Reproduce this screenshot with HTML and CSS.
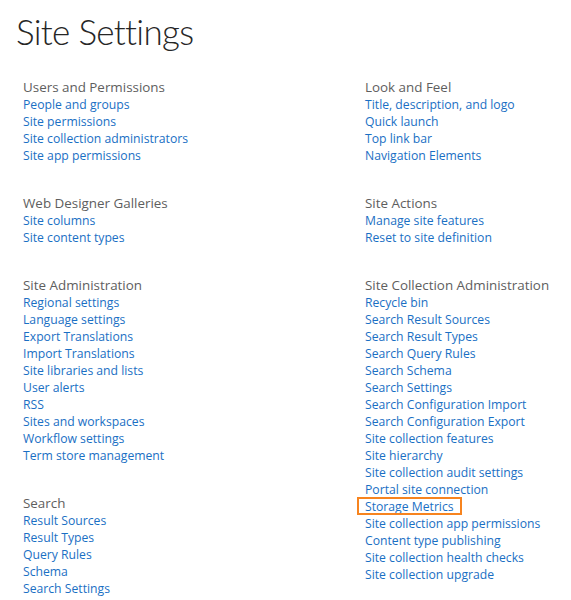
FILE: index.html
```html
<!DOCTYPE html>
<html>
<head>
<meta charset="utf-8">
<link rel="stylesheet" href="styles.css">
</head>
<body>
<h1 class="title">Site Settings</h1>
<div class="grid">
  <div class="col">
    <div class="section">
      <div class="sec-head">Users and Permissions</div>
      <a class="link" href="#">People and groups</a>
      <a class="link" href="#">Site permissions</a>
      <a class="link" href="#">Site collection administrators</a>
      <a class="link" href="#">Site app permissions</a>
    </div>
    <div class="section">
      <div class="sec-head">Web Designer Galleries</div>
      <a class="link" href="#">Site columns</a>
      <a class="link" href="#">Site content types</a>
    </div>
    <div class="section">
      <div class="sec-head">Site Administration</div>
      <a class="link" href="#">Regional settings</a>
      <a class="link" href="#">Language settings</a>
      <a class="link" href="#">Export Translations</a>
      <a class="link" href="#">Import Translations</a>
      <a class="link" href="#">Site libraries and lists</a>
      <a class="link" href="#">User alerts</a>
      <a class="link" href="#">RSS</a>
      <a class="link" href="#">Sites and workspaces</a>
      <a class="link" href="#">Workflow settings</a>
      <a class="link" href="#">Term store management</a>
    </div>
    <div class="section">
      <div class="sec-head">Search</div>
      <a class="link" href="#">Result Sources</a>
      <a class="link" href="#">Result Types</a>
      <a class="link" href="#">Query Rules</a>
      <a class="link" href="#">Schema</a>
      <a class="link" href="#">Search Settings</a>
    </div>
  </div>
  <div class="col">
    <div class="section">
      <div class="sec-head">Look and Feel</div>
      <a class="link" href="#">Title, description, and logo</a>
      <a class="link" href="#">Quick launch</a>
      <a class="link" href="#">Top link bar</a>
      <a class="link" href="#">Navigation Elements</a>
    </div>
    <div class="section">
      <div class="sec-head">Site Actions</div>
      <a class="link" href="#">Manage site features</a>
      <a class="link" href="#">Reset to site definition</a>
    </div>
    <div class="section">
      <div class="sec-head">Site Collection Administration</div>
      <a class="link" href="#">Recycle bin</a>
      <a class="link" href="#">Search Result Sources</a>
      <a class="link" href="#">Search Result Types</a>
      <a class="link" href="#">Search Query Rules</a>
      <a class="link" href="#">Search Schema</a>
      <a class="link" href="#">Search Settings</a>
      <a class="link" href="#">Search Configuration Import</a>
      <a class="link" href="#">Search Configuration Export</a>
      <a class="link" href="#">Site collection features</a>
      <a class="link" href="#">Site hierarchy</a>
      <a class="link" href="#">Site collection audit settings</a>
      <a class="link" href="#">Portal site connection</a>
      <a class="link highlighted" href="#">Storage Metrics</a>
      <a class="link" href="#">Site collection app permissions</a>
      <a class="link" href="#">Content type publishing</a>
      <a class="link" href="#">Site collection health checks</a>
      <a class="link" href="#">Site collection upgrade</a>
    </div>
  </div>
</div>
</body>
</html>
```
FILE: styles.css
```css
html, body {
  margin: 0;
  padding: 0;
  background: #ffffff;
}
body {
  font-family: "Open Sans", "Noto Sans", "Liberation Sans", sans-serif;
  width: 571px;
  height: 600px;
  overflow: hidden;
}
.title {
  margin: 0;
  padding: 9px 0 0 16px;
  font-family: Lato, "Open Sans", sans-serif;
  font-size: 35px;
  line-height: 44px;
  font-weight: 300;
  letter-spacing: -0.7px;
  color: #262626;
}
.grid {
  display: grid;
  grid-template-columns: 342px 1fr;
  padding: 26px 0 0 23px;
}
.col {
  display: flex;
  flex-direction: column;
  gap: 31px;
}
.section {
  display: flex;
  flex-direction: column;
  align-items: flex-start;
}
.sec-head {
  font-size: 13.4px;
  line-height: 17px;
  color: #5e5e5e;
  white-space: nowrap;
}
.link {
  font-size: 12.2px;
  line-height: 17px;
  color: #1a6fc4;
  text-decoration: none;
  white-space: nowrap;
}
.highlighted {
  position: relative;
}
.highlighted::after {
  content: "";
  position: absolute;
  left: -8px;
  right: -8px;
  top: -1px;
  bottom: 0;
  border: 2.5px solid #f7841f;
}
```
